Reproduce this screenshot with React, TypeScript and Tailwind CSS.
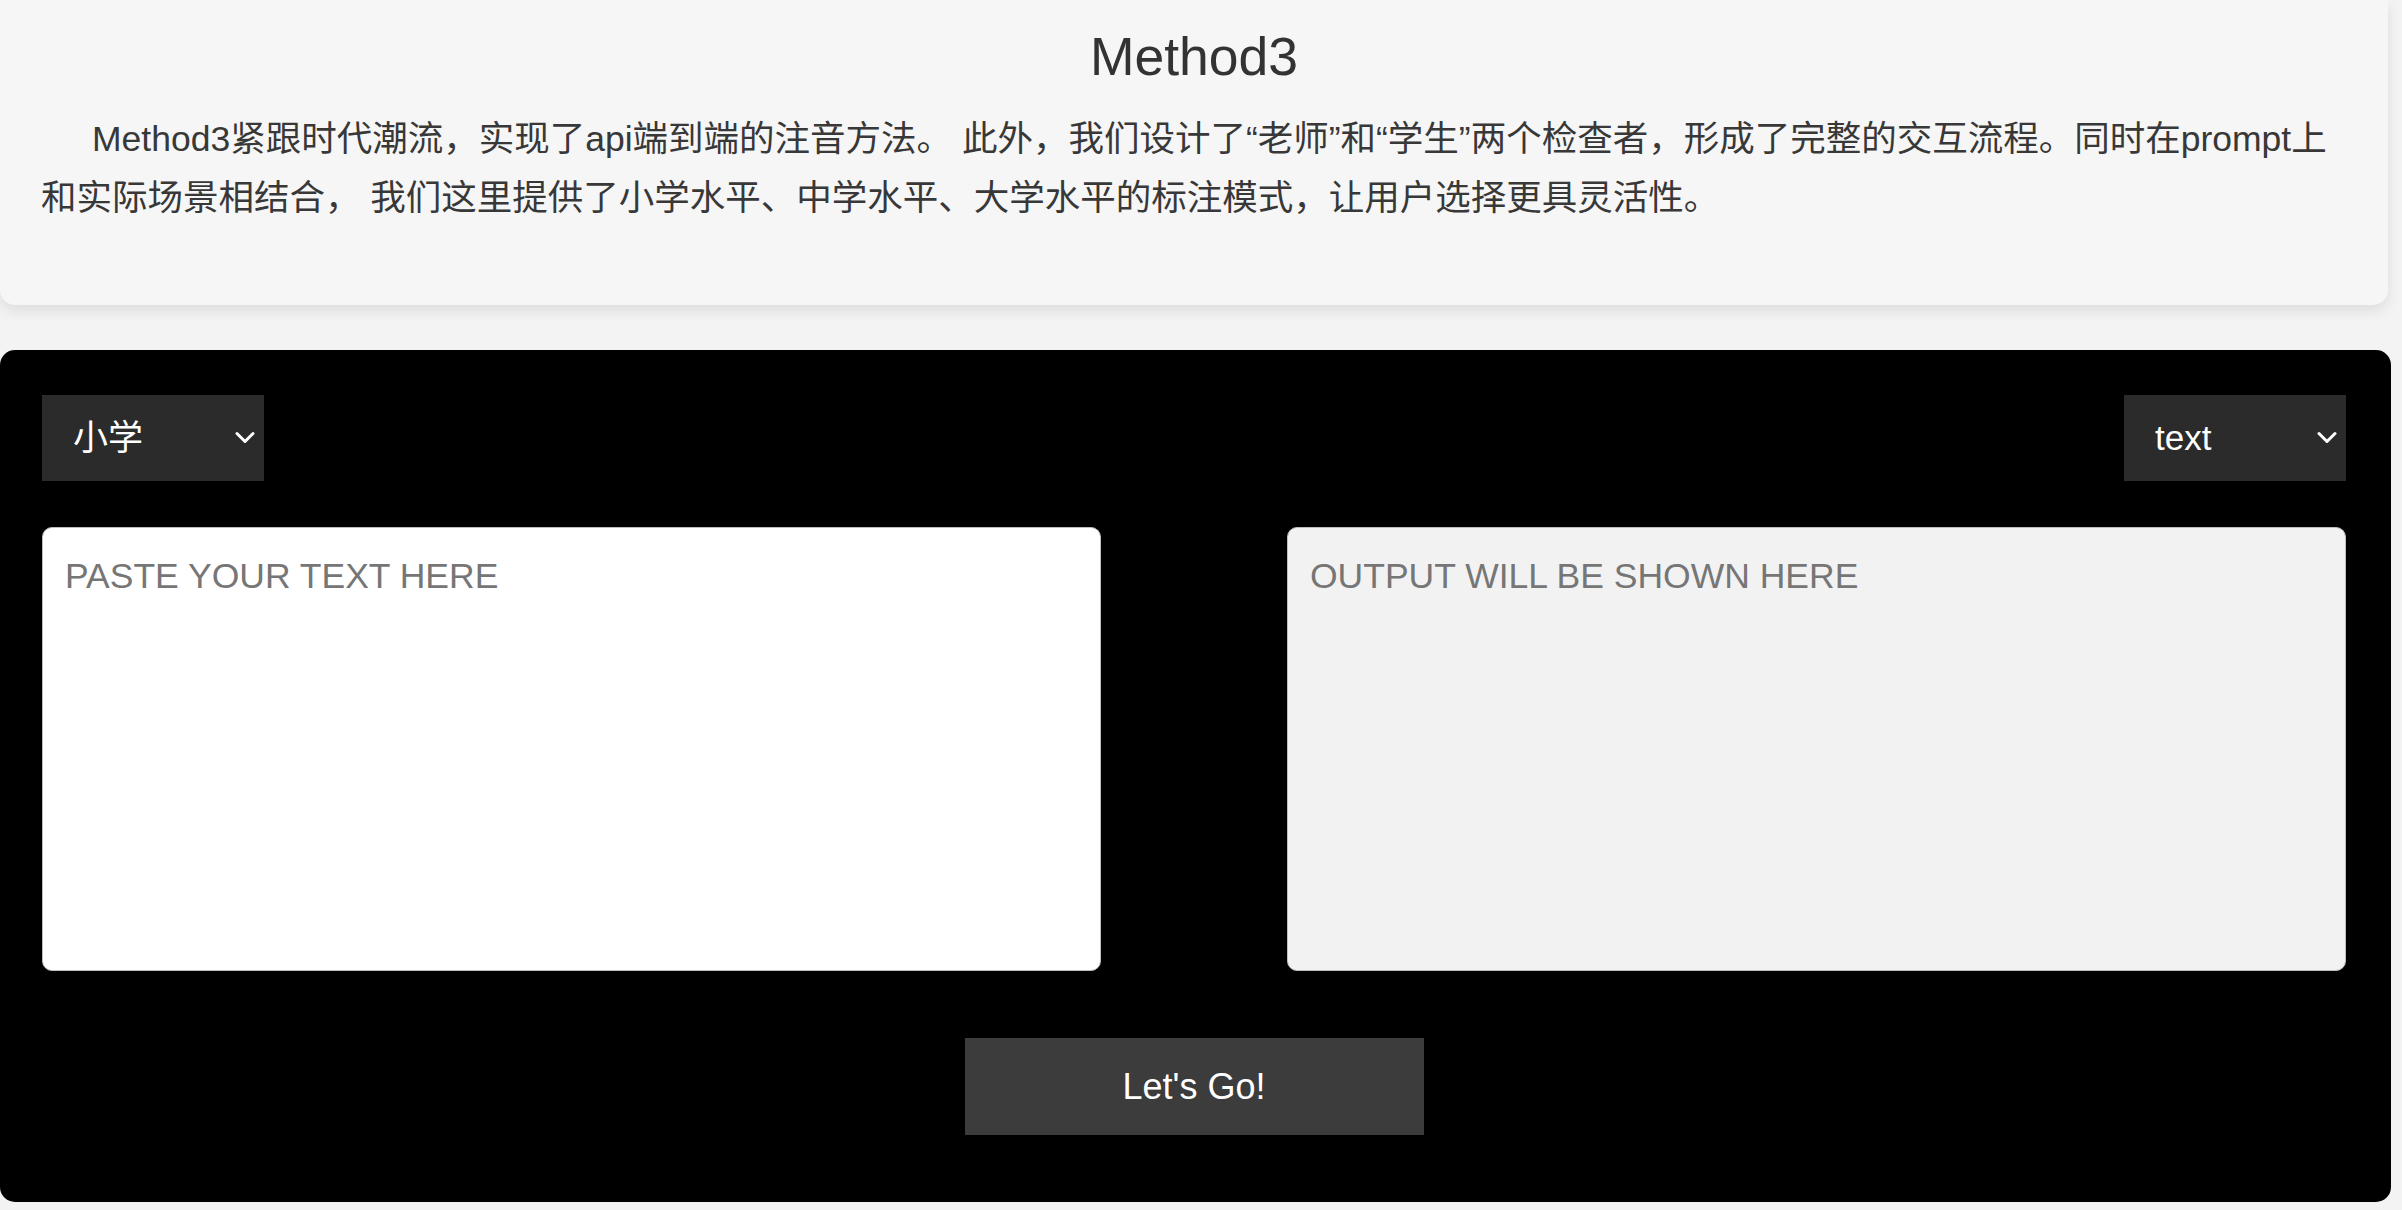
import { useState } from 'react'

const FONT =
  "font-['Liberation_Sans','Noto_Sans_CJK_SC',Arial,sans-serif]"

function Chevron() {
  return (
    <svg
      width="20"
      height="13"
      viewBox="0 0 20 13"
      fill="none"
      stroke="currentColor"
      strokeWidth="3"
      strokeLinecap="round"
      strokeLinejoin="round"
      className="pointer-events-none absolute right-[9px] top-1/2 -translate-y-1/2 text-white"
    >
      <polyline points="2,2 10,10 18,2" />
    </svg>
  )
}

function DarkSelect({
  value,
  options,
  onChange,
}: {
  value: string
  options: string[]
  onChange: (v: string) => void
}) {
  return (
    <div className="relative w-[222px] h-[86px]">
      <select
        value={value}
        onChange={(event) => onChange(event.target.value)}
        className={`h-full w-full appearance-none bg-[#2b2b2b] pl-[31px] pr-10 text-[35px] text-white outline-none ${FONT}`}
      >
        {options.map((option) => (
          <option key={option} value={option}>
            {option}
          </option>
        ))}
      </select>
      <Chevron />
    </div>
  )
}

export default function App() {
  const [level, setLevel] = useState('小学')
  const [format, setFormat] = useState('text')
  const [input, setInput] = useState('')

  return (
    <div className={`min-h-screen bg-[#f3f3f3] pb-[8px] ${FONT}`}>
      <div className="w-[2388px] rounded-b-[15px] bg-[#f6f6f6] px-[41px] pt-[27px] pb-[77px] shadow-[0_6px_14px_rgba(0,0,0,0.09)]">
        <h1 className="text-center text-[53.5px] leading-[60px] text-[#333]">Method3</h1>
        <p className="mt-[23px] indent-[51px] text-[35.5px] leading-[59px] text-[#383838]">
          Method3紧跟时代潮流，实现了api端到端的注音方法。 此外，我们设计了“老师”和“学生”两个检查者，形成了完整的交互流程。同时在prompt上和实际场景相结合，
          我们这里提供了小学水平、中学水平、大学水平的标注模式，让用户选择更具灵活性。
        </p>
      </div>

      <div className="mt-[45px] w-[2391px] rounded-[15px] bg-black pt-[45px] pb-[67px] pl-[42px] pr-[45px]">
        <div className="flex justify-between">
          <DarkSelect value={level} options={['小学', '中学', '大学']} onChange={setLevel} />
          <DarkSelect value={format} options={['text', 'html']} onChange={setFormat} />
        </div>

        <div className="mt-[46px] flex justify-between">
          <textarea
            value={input}
            onChange={(event) => setInput(event.target.value)}
            placeholder="PASTE YOUR TEXT HERE"
            className={`h-[444px] w-[1059px] resize-none rounded-[10px] border border-[#bdbdbd] bg-white px-[22px] pt-[22px] text-[35.5px] text-[#222] outline-none placeholder:text-[#767676] ${FONT}`}
          />
          <textarea
            readOnly
            placeholder="OUTPUT WILL BE SHOWN HERE"
            className={`h-[444px] w-[1059px] resize-none rounded-[10px] border border-[#bdbdbd] bg-[#f2f2f2] px-[22px] pt-[22px] text-[35.5px] text-[#222] outline-none placeholder:text-[#767676] ${FONT}`}
          />
        </div>

        <div className="mt-[67px] flex justify-center">
          <button
            type="button"
            className={`h-[97px] w-[459px] bg-[#3c3c3c] text-[36px] text-white ${FONT}`}
          >
            Let's Go!
          </button>
        </div>
      </div>
    </div>
  )
}
